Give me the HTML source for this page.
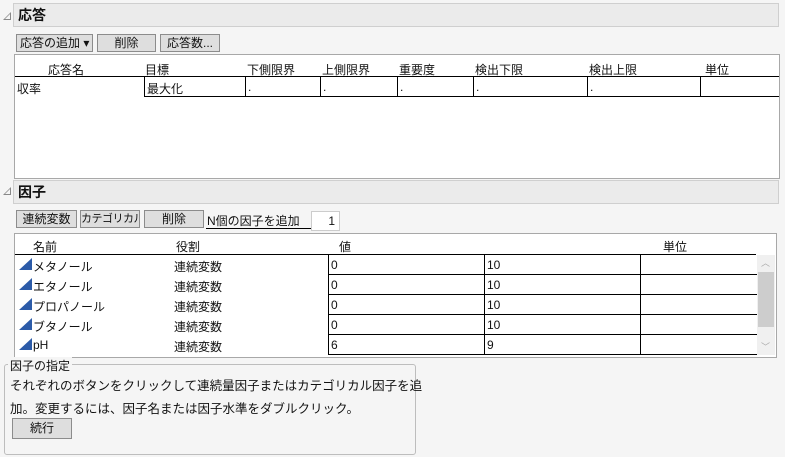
<!DOCTYPE html>
<html><head><meta charset="utf-8"><style>
*{margin:0;padding:0;box-sizing:border-box}
body{width:785px;height:457px;background:#f5f5f5;font-family:"Liberation Sans","Noto Sans CJK JP",sans-serif;font-size:12px;color:#111;position:relative;overflow:hidden}
.a{position:absolute;white-space:nowrap}
.hdr{position:absolute;left:13px;width:766px;background:#ebebeb;border:1px solid #cfcfcf;font-weight:bold;font-size:14px;padding-left:4px}
.tri{position:absolute;width:0;height:0;border-left:8px solid transparent;border-bottom:8px solid #888}
.tri:after{content:"";position:absolute;left:-6px;top:2px;border-left:5px solid transparent;border-bottom:5px solid #f5f5f5}
.btn{position:absolute;height:18px;background:#dedede;border:1px solid #8c8c8c;text-align:center;line-height:16px;white-space:nowrap;overflow:hidden}
.box{position:absolute;background:#fff;border:1px solid #a8a8a8}
.hl{position:absolute;height:2px;background:#000}
.vl{position:absolute;width:1px;background:#000}
.ic{position:absolute;width:0;height:0;border-left:13px solid transparent;border-bottom:12px solid #2c5ba8}
</style></head><body>
<div class="tri" style="left:3px;top:12px"></div>
<div class="hdr" style="top:3px;height:24px;line-height:22px">応答</div>
<div class="btn" style="left:16px;top:34px;width:77px;text-align:left;padding-left:3px">応答の追加 ▾</div>
<div class="btn" style="left:97px;top:34px;width:59px">削除</div>
<div class="btn" style="left:160px;top:34px;width:60px">応答数...</div>
<div class="box" style="left:14px;top:54px;width:766px;height:125px"></div>
<div class="a" style="left:48px;top:61px">応答名</div>
<div class="a" style="left:145px;top:61px">目標</div>
<div class="a" style="left:247px;top:61px">下側限界</div>
<div class="a" style="left:322px;top:61px">上側限界</div>
<div class="a" style="left:399px;top:61px">重要度</div>
<div class="a" style="left:475px;top:61px">検出下限</div>
<div class="a" style="left:589px;top:61px">検出上限</div>
<div class="a" style="left:705px;top:61px">単位</div>
<div class="hl" style="left:15px;top:76px;width:764px;height:1px"></div>
<div class="hl" style="left:144px;top:96px;width:635px;height:1px"></div>
<div class="vl" style="left:144px;top:76px;height:21px"></div>
<div class="vl" style="left:245px;top:76px;height:21px"></div>
<div class="vl" style="left:320px;top:76px;height:21px"></div>
<div class="vl" style="left:397px;top:76px;height:21px"></div>
<div class="vl" style="left:473px;top:76px;height:21px"></div>
<div class="vl" style="left:587px;top:76px;height:21px"></div>
<div class="vl" style="left:700px;top:76px;height:21px"></div>
<div class="a" style="left:17px;top:80px">収率</div>
<div class="a" style="left:147px;top:80px">最大化</div>
<div class="a" style="left:248px;top:80px">.</div>
<div class="a" style="left:323px;top:80px">.</div>
<div class="a" style="left:400px;top:80px">.</div>
<div class="a" style="left:476px;top:80px">.</div>
<div class="a" style="left:590px;top:80px">.</div>

<div class="tri" style="left:3px;top:187px"></div>
<div class="hdr" style="top:180px;height:24px;line-height:22px">因子</div>
<div class="btn" style="left:16px;top:210px;width:61px">連続変数</div>
<div class="btn" style="left:80px;top:210px;width:60px;font-size:11px;letter-spacing:-0.5px">カテゴリカル</div>
<div class="btn" style="left:144px;top:210px;width:60px">削除</div>
<div class="a" style="left:207px;top:212px">N個の因子を追加</div>
<div class="hl" style="left:206px;top:228px;width:105px;height:1px"></div>
<div class="box" style="left:311px;top:211px;width:29px;height:20px;text-align:right;padding-right:4px;line-height:18px;border-color:#ccc">1</div>
<div class="box" style="left:14px;top:233px;width:763px;height:125px"></div>
<div class="a" style="left:33px;top:238px">名前</div>
<div class="a" style="left:176px;top:238px">役割</div>
<div class="a" style="left:339px;top:238px">値</div>
<div class="a" style="left:663px;top:238px">単位</div>
<div class="hl" style="left:15px;top:254px;width:741px;height:1px"></div>
<div class="hl" style="left:328px;top:274px;width:429px;height:1px"></div>
<div class="hl" style="left:328px;top:294px;width:429px;height:1px"></div>
<div class="hl" style="left:328px;top:314px;width:429px;height:1px"></div>
<div class="hl" style="left:328px;top:334px;width:429px;height:1px"></div>
<div class="hl" style="left:328px;top:354px;width:429px;height:1px"></div>
<div class="vl" style="left:328px;top:254px;height:101px"></div>
<div class="vl" style="left:484px;top:254px;height:101px"></div>
<div class="vl" style="left:640px;top:254px;height:101px"></div>
<div class="a" style="left:757px;top:255px;width:18px;height:100px;background:#f0f0f0"></div>
<div class="a" style="left:758px;top:272px;width:16px;height:55px;background:#cdcdcd"></div>
<div class="a" style="left:761px;top:256px;font-size:9px;color:#aaa">︿</div>
<div class="a" style="left:761px;top:340px;font-size:9px;color:#aaa">﹀</div>
<div class="ic" style="left:19px;top:258px"></div><div class="a" style="left:33px;top:258px">メタノール</div><div class="a" style="left:174px;top:258px">連続変数</div><div class="a" style="left:331px;top:258px">0</div><div class="a" style="left:487px;top:258px">10</div>
<div class="ic" style="left:19px;top:278px"></div><div class="a" style="left:33px;top:278px">エタノール</div><div class="a" style="left:174px;top:278px">連続変数</div><div class="a" style="left:331px;top:278px">0</div><div class="a" style="left:487px;top:278px">10</div>
<div class="ic" style="left:19px;top:298px"></div><div class="a" style="left:33px;top:298px">プロパノール</div><div class="a" style="left:174px;top:298px">連続変数</div><div class="a" style="left:331px;top:298px">0</div><div class="a" style="left:487px;top:298px">10</div>
<div class="ic" style="left:19px;top:318px"></div><div class="a" style="left:33px;top:318px">ブタノール</div><div class="a" style="left:174px;top:318px">連続変数</div><div class="a" style="left:331px;top:318px">0</div><div class="a" style="left:487px;top:318px">10</div>
<div class="ic" style="left:19px;top:338px"></div><div class="a" style="left:33px;top:338px">pH</div><div class="a" style="left:174px;top:338px">連続変数</div><div class="a" style="left:331px;top:338px">6</div><div class="a" style="left:487px;top:338px">9</div>

<div class="a" style="left:4px;top:364px;width:412px;height:91px;border:1px solid #bdbdbd;border-radius:3px"></div>
<div class="a" style="left:8px;top:357px;background:#f5f5f5;padding:0 2px">因子の指定</div>
<div class="a" style="left:10px;top:375px;font-size:12.5px">それぞれのボタンをクリックして連続量因子またはカテゴリカル因子を追</div>
<div class="a" style="left:10px;top:398px;font-size:12.5px">加。変更するには、因子名または因子水準をダブルクリック。</div>
<div class="btn" style="left:12px;top:418px;width:60px;height:21px;line-height:19px">続行</div>
</body></html>
